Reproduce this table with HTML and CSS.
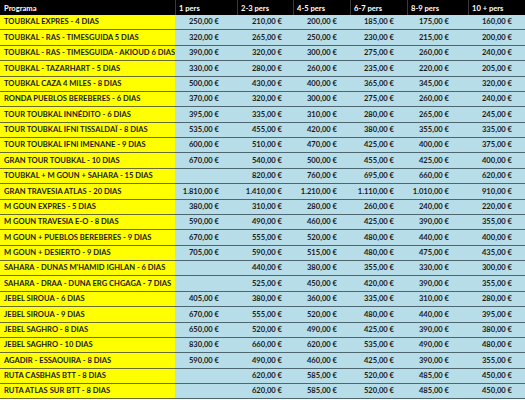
FILE: index.html
```html
<!DOCTYPE html>
<html lang="es">
<head>
<meta charset="utf-8">
<title>Precios</title>
<link rel="stylesheet" href="styles.css">
</head>
<body>
<div class="sheet">
  <div class="row head">
    <div class="cell">Programa</div>
    <div class="cell">1 pers</div>
    <div class="cell">2-3 pers</div>
    <div class="cell">4-5 pers</div>
    <div class="cell">6-7 pers</div>
    <div class="cell">8-9 pers</div>
    <div class="cell">10 + pers</div>
  </div>
  <div class="row"><div class="cell name">TOUBKAL EXPRES - 4 DIAS</div><div class="cell">250,00 €</div><div class="cell">210,00 €</div><div class="cell">200,00 €</div><div class="cell">185,00 €</div><div class="cell">175,00 €</div><div class="cell">160,00 €</div></div>
  <div class="row"><div class="cell name">TOUBKAL - RAS - TIMESGUIDA 5 DIAS</div><div class="cell">320,00 €</div><div class="cell">265,00 €</div><div class="cell">250,00 €</div><div class="cell">230,00 €</div><div class="cell">215,00 €</div><div class="cell">200,00 €</div></div>
  <div class="row"><div class="cell name">TOUBKAL - RAS - TIMESGUIDA - AKIOUD 6 DIAS</div><div class="cell">390,00 €</div><div class="cell">320,00 €</div><div class="cell">300,00 €</div><div class="cell">275,00 €</div><div class="cell">260,00 €</div><div class="cell">240,00 €</div></div>
  <div class="row"><div class="cell name">TOUBKAL - TAZARHART - 5 DIAS</div><div class="cell">330,00 €</div><div class="cell">280,00 €</div><div class="cell">260,00 €</div><div class="cell">235,00 €</div><div class="cell">220,00 €</div><div class="cell">205,00 €</div></div>
  <div class="row"><div class="cell name">TOUBKAL CAZA 4 MILES - 8 DIAS</div><div class="cell">500,00 €</div><div class="cell">430,00 €</div><div class="cell">400,00 €</div><div class="cell">365,00 €</div><div class="cell">345,00 €</div><div class="cell">320,00 €</div></div>
  <div class="row"><div class="cell name">RONDA PUEBLOS BEREBERES - 6 DIAS</div><div class="cell">370,00 €</div><div class="cell">320,00 €</div><div class="cell">300,00 €</div><div class="cell">275,00 €</div><div class="cell">260,00 €</div><div class="cell">240,00 €</div></div>
  <div class="row"><div class="cell name">TOUR TOUBKAL INNÉDITO - 6 DIAS</div><div class="cell">395,00 €</div><div class="cell">335,00 €</div><div class="cell">310,00 €</div><div class="cell">280,00 €</div><div class="cell">265,00 €</div><div class="cell">245,00 €</div></div>
  <div class="row"><div class="cell name">TOUR TOUBKAL IFNI TISSALDAÏ - 8 DIAS</div><div class="cell">535,00 €</div><div class="cell">455,00 €</div><div class="cell">420,00 €</div><div class="cell">380,00 €</div><div class="cell">355,00 €</div><div class="cell">335,00 €</div></div>
  <div class="row"><div class="cell name">TOUR TOUBKAL IFNI IMENANE - 9 DIAS</div><div class="cell">600,00 €</div><div class="cell">510,00 €</div><div class="cell">470,00 €</div><div class="cell">425,00 €</div><div class="cell">400,00 €</div><div class="cell">375,00 €</div></div>
  <div class="row"><div class="cell name">GRAN TOUR TOUBKAL - 10 DIAS</div><div class="cell">670,00 €</div><div class="cell">540,00 €</div><div class="cell">500,00 €</div><div class="cell">455,00 €</div><div class="cell">425,00 €</div><div class="cell">400,00 €</div></div>
  <div class="row"><div class="cell name">TOUBKAL + M GOUN + SAHARA - 15 DIAS</div><div class="cell"></div><div class="cell">820,00 €</div><div class="cell">760,00 €</div><div class="cell">695,00 €</div><div class="cell">660,00 €</div><div class="cell">620,00 €</div></div>
  <div class="row"><div class="cell name">GRAN TRAVESIA ATLAS - 20 DIAS</div><div class="cell">1.810,00 €</div><div class="cell">1.410,00 €</div><div class="cell">1.210,00 €</div><div class="cell">1.110,00 €</div><div class="cell">1.010,00 €</div><div class="cell">910,00 €</div></div>
  <div class="row"><div class="cell name">M GOUN EXPRES - 5 DIAS</div><div class="cell">380,00 €</div><div class="cell">310,00 €</div><div class="cell">280,00 €</div><div class="cell">260,00 €</div><div class="cell">240,00 €</div><div class="cell">220,00 €</div></div>
  <div class="row"><div class="cell name">M GOUN TRAVESIA E-O - 8 DIAS</div><div class="cell">590,00 €</div><div class="cell">490,00 €</div><div class="cell">460,00 €</div><div class="cell">425,00 €</div><div class="cell">390,00 €</div><div class="cell">355,00 €</div></div>
  <div class="row"><div class="cell name">M GOUN + PUEBLOS BEREBERES - 9 DIAS</div><div class="cell">670,00 €</div><div class="cell">555,00 €</div><div class="cell">520,00 €</div><div class="cell">480,00 €</div><div class="cell">440,00 €</div><div class="cell">400,00 €</div></div>
  <div class="row"><div class="cell name">M GOUN + DESIERTO - 9 DIAS</div><div class="cell">705,00 €</div><div class="cell">590,00 €</div><div class="cell">515,00 €</div><div class="cell">480,00 €</div><div class="cell">475,00 €</div><div class="cell">435,00 €</div></div>
  <div class="row"><div class="cell name">SAHARA - DUNAS M'HAMID IGHLAN - 6 DIAS</div><div class="cell"></div><div class="cell">440,00 €</div><div class="cell">380,00 €</div><div class="cell">355,00 €</div><div class="cell">330,00 €</div><div class="cell">300,00 €</div></div>
  <div class="row"><div class="cell name">SAHARA - DRAA - DUNA ERG CHGAGA - 7 DIAS</div><div class="cell"></div><div class="cell">525,00 €</div><div class="cell">450,00 €</div><div class="cell">420,00 €</div><div class="cell">390,00 €</div><div class="cell">355,00 €</div></div>
  <div class="row"><div class="cell name">JEBEL SIROUA - 6 DIAS</div><div class="cell">405,00 €</div><div class="cell">380,00 €</div><div class="cell">360,00 €</div><div class="cell">335,00 €</div><div class="cell">310,00 €</div><div class="cell">280,00 €</div></div>
  <div class="row"><div class="cell name">JEBEL SIROUA - 9 DIAS</div><div class="cell">670,00 €</div><div class="cell">555,00 €</div><div class="cell">520,00 €</div><div class="cell">480,00 €</div><div class="cell">440,00 €</div><div class="cell">395,00 €</div></div>
  <div class="row"><div class="cell name">JEBEL SAGHRO - 8 DIAS</div><div class="cell">650,00 €</div><div class="cell">520,00 €</div><div class="cell">490,00 €</div><div class="cell">425,00 €</div><div class="cell">390,00 €</div><div class="cell">380,00 €</div></div>
  <div class="row"><div class="cell name">JEBEL SAGHRO - 10 DIAS</div><div class="cell">830,00 €</div><div class="cell">660,00 €</div><div class="cell">620,00 €</div><div class="cell">535,00 €</div><div class="cell">490,00 €</div><div class="cell">480,00 €</div></div>
  <div class="row"><div class="cell name">AGADIR - ESSAOUIRA - 8 DIAS</div><div class="cell">590,00 €</div><div class="cell">490,00 €</div><div class="cell">460,00 €</div><div class="cell">425,00 €</div><div class="cell">390,00 €</div><div class="cell">355,00 €</div></div>
  <div class="row"><div class="cell name">RUTA CASBHAS BTT - 8 DIAS</div><div class="cell"></div><div class="cell">620,00 €</div><div class="cell">585,00 €</div><div class="cell">520,00 €</div><div class="cell">485,00 €</div><div class="cell">450,00 €</div></div>
  <div class="row"><div class="cell name">RUTA ATLAS SUR BTT - 8 DIAS</div><div class="cell"></div><div class="cell">620,00 €</div><div class="cell">585,00 €</div><div class="cell">520,00 €</div><div class="cell">485,00 €</div><div class="cell">450,00 €</div></div>
</div>
</body>
</html>
```
FILE: styles.css
```css
html, body {
  margin: 0;
  padding: 0;
  background: #ffffff;
}

.sheet {
  width: 525px;
  font-family: "Lato", "Open Sans", sans-serif;
  font-weight: 700;
  font-size: 7.6px;
  color: #1a1a1a;
}

.row {
  display: grid;
  grid-template-columns: 175px 62px 56px 57px 57px 61px 57px;
  height: 15.375px;
  box-sizing: border-box;
}

.cell {
  box-sizing: border-box;
  display: flex;
  align-items: flex-end;
  justify-content: flex-end;
  padding-bottom: 3px;
  white-space: nowrap;
  overflow: hidden;
  background: #b7dde8;
  border-bottom: 1px solid #4d6670;
}

.row .name {
  justify-content: flex-start;
  padding-left: 4px;
  background: #ffff00;
  border-bottom-color: #6b6b35;
}

.row > :nth-child(2) { padding-right: 18px; }
.row > :nth-child(3) { padding-right: 11px; }
.row > :nth-child(4) { padding-right: 13px; }
.row > :nth-child(5) { padding-right: 13px; }
.row > :nth-child(6) { padding-right: 19px; }
.row > :nth-child(7) { padding-right: 13px; }

.head {
  height: 15px;
}

.head .cell {
  background: #000000;
  color: #ffffff;
  justify-content: flex-start;
  align-items: flex-end;
  padding: 0 0 2px 3px;
  border-bottom: none;
  border-left: 1px solid #3a3a3a;
}

.head .cell:first-child {
  border-left: none;
  padding-left: 4px;
}
```
